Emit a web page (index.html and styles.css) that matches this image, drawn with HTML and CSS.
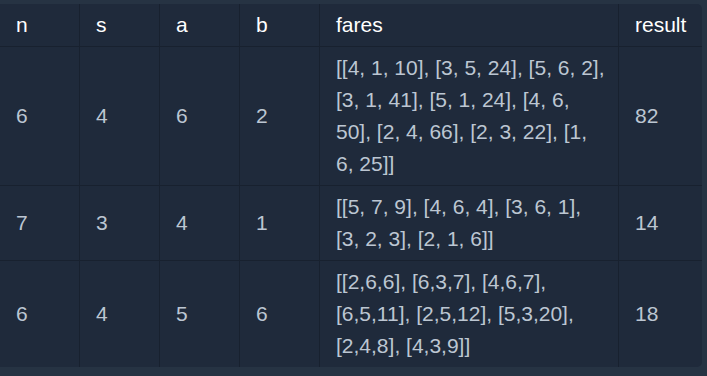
FILE: index.html
```html
<!DOCTYPE html>
<html lang="en">
<head>
<meta charset="utf-8">
<title>Test cases</title>
<link rel="stylesheet" href="styles.css">
</head>
<body>
<div class="wrap">
  <table class="cases">
    <colgroup>
      <col class="c-num"><col class="c-num"><col class="c-num"><col class="c-num"><col class="c-fares"><col class="c-res">
    </colgroup>
    <thead>
      <tr><th>n</th><th>s</th><th>a</th><th>b</th><th>fares</th><th>result</th></tr>
    </thead>
    <tbody>
      <tr><td>6</td><td>4</td><td>6</td><td>2</td><td class="fares">[[4, 1, 10], [3, 5, 24], [5, 6, 2], [3, 1, 41], [5, 1, 24], [4, 6, 50], [2, 4, 66], [2, 3, 22], [1, 6, 25]]</td><td>82</td></tr>
      <tr><td>7</td><td>3</td><td>4</td><td>1</td><td class="fares">[[5, 7, 9], [4, 6, 4], [3, 6, 1], [3, 2, 3], [2, 1, 6]]</td><td>14</td></tr>
      <tr><td>6</td><td>4</td><td>5</td><td>6</td><td class="fares">[[2,6,6], [6,3,7], [4,6,7], [6,5,11], [2,5,12], [5,3,20], [2,4,8], [4,3,9]]</td><td>18</td></tr>
    </tbody>
  </table>
</div>
</body>
</html>
```

FILE: styles.css
```css
html, body {
  margin: 0;
  padding: 0;
  background: #263343;
  height: 100%;
}
.wrap {
  padding: 4px 5px 8px 0;
}
.cases {
  width: 702px;
  table-layout: fixed;
  border-collapse: separate;
  border-spacing: 0;
  background: #1f2a3b;
  border-radius: 0 5px 5px 0;
  font-family: "Liberation Sans", Arial, sans-serif;
  font-size: 21px;
  line-height: 32px;
  color: #bcc6d2;
}
.c-num { width: 80px; }
.c-fares { width: 299px; }
.c-res { width: 83px; }
.cases th, .cases td {
  padding: 5px 16px 5px 16px;
  text-align: left;
  border-right: 1px solid #18212f;
  border-bottom: 1px solid #18212f;
  vertical-align: middle;
}
.cases th:last-child, .cases td:last-child { border-right: none; }
.cases tbody tr:last-child td { border-bottom: none; }
.cases th {
  font-weight: 400;
  color: #ffffff;
}
.cases td.fares {
  vertical-align: top;
  padding-right: 10px;
}
```
